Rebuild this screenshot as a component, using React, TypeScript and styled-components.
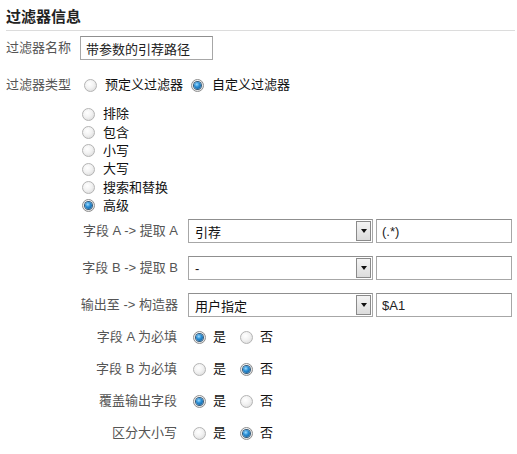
import React from "react";
import styled, { createGlobalStyle } from "styled-components";

const Global = createGlobalStyle`
  html, body { margin: 0; padding: 0; background: #fff; }
  body { font-family: "Liberation Sans", "Noto Sans CJK SC", sans-serif; font-size: 13px; color: #222; }
  * { box-sizing: border-box; }
`;

const Page = styled.div`
  width: 517px;
  height: 454px;
  padding: 0 2px 0 6px;
  display: flex;
  flex-direction: column;
`;

const Title = styled.h2`
  margin: 7px 0 0 0;
  font-size: 15px;
  font-weight: bold;
  line-height: 20px;
  color: #222;
  padding-bottom: 3px;
  border-bottom: 1px solid #dcdcdc;
`;

const Row = styled.div<{ $top: number; $h?: number }>`
  display: flex;
  align-items: center;
  margin-top: ${(p) => p.$top}px;
  height: ${(p) => p.$h ?? 24}px;
`;

const Label = styled.div<{ $w: number; $right?: boolean; $gap?: number }>`
  width: ${(p) => p.$w}px;
  flex: none;
  color: #555;
  text-align: ${(p) => (p.$right ? "right" : "left")};
  margin-right: ${(p) => p.$gap ?? 0}px;
  white-space: nowrap;
  line-height: 18px;
`;

const TextBox = styled.input<{ $w: number }>`
  width: ${(p) => p.$w}px;
  height: 24px;
  border: 1px solid #a7a7a7;
  border-top-color: #8f8f8f;
  padding: 0 5px;
  font: inherit;
  font-size: 13px;
  color: #222;
  background: #fff;
  outline: none;
  flex: none;
`;

const RadioGroup = styled.div<{ $gap: number }>`
  display: flex;
  align-items: center;
  gap: ${(p) => p.$gap}px;
`;

const Option = styled.label<{ $gap?: number }>`
  display: flex;
  align-items: center;
  gap: ${(p) => p.$gap ?? 8}px;
  color: #111;
  white-space: nowrap;
  line-height: 18px;
`;

const Dot = styled.span<{ $on?: boolean }>`
  width: 13px;
  height: 13px;
  border-radius: 50%;
  flex: none;
  border: 1px solid ${(p) => (p.$on ? "#8e8e8e" : "#b4b4b4")};
  background: radial-gradient(circle at 40% 35%, #ffffff 0%, #f2f2f2 45%, #d4d4d4 100%);
  display: flex;
  align-items: center;
  justify-content: center;
  &::after {
    content: "";
    display: ${(p) => (p.$on ? "block" : "none")};
    width: 7px;
    height: 7px;
    border-radius: 50%;
    background: radial-gradient(circle at 40% 35%, #9fdcff 0%, #2a8fd6 40%, #0b4f8a 100%);
    box-shadow: 0 0 0 1px #335a7a;
  }
`;

const List = styled.div`
  display: flex;
  flex-direction: column;
  margin: 10px 0 0 76px;
`;

const ListItem = styled(Option)`
  height: 18.35px;
`;

const Select = styled.div<{ $w: number }>`
  width: ${(p) => p.$w}px;
  height: 24px;
  flex: none;
  display: flex;
  align-items: stretch;
  border: 1px solid #a7a7a7;
  border-top-color: #8f8f8f;
  background: #fff;
  padding: 1px;
`;

const SelectText = styled.div`
  flex: 1;
  padding-left: 5px;
  display: flex;
  align-items: center;
  color: #111;
`;

const Arrow = styled.div`
  width: 15px;
  flex: none;
  border: 1px solid #8a8a8a;
  background: linear-gradient(#f4f4f4, #dcdcdc);
  display: flex;
  align-items: center;
  justify-content: center;
  &::after {
    content: "";
    border-left: 3.5px solid transparent;
    border-right: 3.5px solid transparent;
    border-top: 4px solid #111;
  }
`;

const FieldRow = styled(Row)`
  gap: 0;
`;

const Spacer = styled.div<{ $w: number }>`
  width: ${(p) => p.$w}px;
  flex: none;
`;

const fields = [
  { label: "字段 A -> 提取 A", sel: "引荐", val: "(.*)" },
  { label: "字段 B -> 提取 B", sel: "-", val: "" },
  { label: "输出至 -> 构造器", sel: "用户指定", val: "$A1" },
];

const yesNo = [
  { label: "字段 A 为必填", yes: true },
  { label: "字段 B 为必填", yes: false },
  { label: "覆盖输出字段", yes: true },
  { label: "区分大小写", yes: false },
];

const types = ["排除", "包含", "小写", "大写", "搜索和替换", "高级"];

export default function App() {
  return (
    <Page>
      <Global />
      <Title>过滤器信息</Title>
      <Row $top={5}>
        <Label $w={74}>过滤器名称</Label>
        <TextBox $w={133} readOnly value="带参数的引荐路径" />
      </Row>
      <Row $top={15} $h={20}>
        <Label $w={78}>过滤器类型</Label>
        <RadioGroup $gap={8}>
          <Option>
            <Dot />
            预定义过滤器
          </Option>
          <Option>
            <Dot $on />
            自定义过滤器
          </Option>
        </RadioGroup>
      </Row>
      <List>
        {types.map((t) => (
          <ListItem key={t}>
            <Dot $on={t === "高级"} />
            {t}
          </ListItem>
        ))}
      </List>
      {fields.map((f, i) => (
        <FieldRow key={f.label} $top={i === 0 ? 4 : 13}>
          <Label $w={172} $right $gap={10}>
            {f.label}
          </Label>
          <Select $w={185}>
            <SelectText>{f.sel}</SelectText>
            <Arrow />
          </Select>
          <Spacer $w={3} />
          <TextBox $w={136} readOnly value={f.val} />
        </FieldRow>
      ))}
      {yesNo.map((r, i) => (
        <Row key={r.label} $top={i === 0 ? 10 : 12} $h={20}>
          <Label $w={171} $right $gap={16}>
            {r.label}
          </Label>
          <RadioGroup $gap={14}>
            <Option $gap={7}>
              <Dot $on={r.yes} />是
            </Option>
            <Option $gap={7}>
              <Dot $on={!r.yes} />否
            </Option>
          </RadioGroup>
        </Row>
      ))}
    </Page>
  );
}
